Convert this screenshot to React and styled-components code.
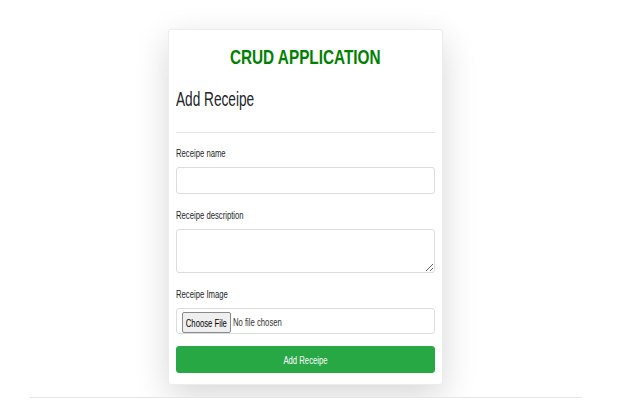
import React from "react";
import styled, { createGlobalStyle } from "styled-components";

const Global = createGlobalStyle`
  html, body { margin: 0; padding: 0; background: #fff; }
  body {
    font-family: "Liberation Sans", Arial, sans-serif;
    color: #212529;
  }
  * { box-sizing: border-box; }
`;

const Squeeze = styled.span`
  display: inline-block;
  white-space: nowrap;
  transform: scaleX(${(p) => p.$x || 0.7});
  transform-origin: ${(p) => (p.$center ? "center" : "left")} center;
`;

const Page = styled.div`
  padding-top: 29px;
  display: flex;
  flex-direction: column;
`;

const Card = styled.div`
  width: 275px;
  margin-left: 168px;
  background: #fff;
  border: 1px solid #ececec;
  border-radius: 3px;
  box-shadow: 0 11px 34px rgba(0, 0, 0, 0.16);
  padding: 14px 7px 11px;
  display: flex;
  flex-direction: column;
`;

const Title = styled.h2`
  margin: 0;
  text-align: center;
  color: #008000;
  font-weight: 700;
  font-size: 21px;
  line-height: 26px;
`;

const Heading = styled.h3`
  margin: 17px 0 0;
  font-weight: 400;
  font-size: 21px;
  line-height: 24px;
  color: #212529;
`;

const Divider = styled.hr`
  margin: 21px 0 0;
  border: 0;
  border-top: 1px solid #e6e6e6;
`;

const Field = styled.div`
  margin-top: ${(p) => p.$gap}px;
  display: flex;
  flex-direction: column;
  gap: 6px;
`;

const Label = styled.label`
  font-size: 11px;
  line-height: 16px;
  color: #212529;
`;

const TextInput = styled.input`
  height: 27px;
  width: 100%;
  border: 1px solid #dadde0;
  border-radius: 3px;
  background: #fff;
  font: inherit;
  font-size: 11px;
  padding: 0 8px;
  outline: none;
`;

const TextArea = styled.textarea`
  height: 44px;
  width: 100%;
  border: 1px solid #dadde0;
  border-radius: 3px;
  background: #fff;
  font: inherit;
  font-size: 11px;
  padding: 4px 8px;
  outline: none;
  display: block;
`;

const FileBox = styled.div`
  height: 26px;
  border: 1px solid #dadde0;
  border-radius: 3px;
  display: flex;
  align-items: flex-start;
  padding: 3px 5px 0;
  gap: 2px;
`;

const ChooseButton = styled.button`
  height: 21px;
  width: 49px;
  padding: 0;
  background: #efefef;
  border: 1px solid #8a8a8a;
  border-radius: 2px;
  font: inherit;
  font-size: 11px;
  color: #000;
  display: flex;
  align-items: center;
  justify-content: center;
  overflow: visible;
`;

const FileText = styled.span`
  font-size: 11px;
  line-height: 21px;
  color: #333;
`;

const Submit = styled.button`
  margin-top: 12px;
  height: 27px;
  width: 100%;
  background: #28a745;
  border: 1px solid #28a745;
  border-radius: 3px;
  color: #fff;
  font: inherit;
  font-size: 11px;
  display: flex;
  align-items: center;
  justify-content: center;
`;

const FooterLine = styled.hr`
  margin: 12px 0 0 30px;
  width: 552px;
  border: 0;
  border-top: 1px solid #e6e6e6;
`;

export default function App() {
  return (
    <>
      <Global />
      <Page>
        <Card>
          <Title>
            <Squeeze $x={0.73} $center>CRUD APPLICATION</Squeeze>
          </Title>
          <Heading>
            <Squeeze $x={0.65}>Add Receipe</Squeeze>
          </Heading>
          <Divider />
          <Field $gap={12}>
            <Label>
              <Squeeze>Receipe name</Squeeze>
            </Label>
            <TextInput type="text" />
          </Field>
          <Field $gap={13}>
            <Label>
              <Squeeze>Receipe description</Squeeze>
            </Label>
            <TextArea />
          </Field>
          <Field $gap={13}>
            <Label>
              <Squeeze>Receipe Image</Squeeze>
            </Label>
            <FileBox>
              <ChooseButton type="button">
                <Squeeze $center>Choose File</Squeeze>
              </ChooseButton>
              <FileText>
                <Squeeze>No file chosen</Squeeze>
              </FileText>
            </FileBox>
          </Field>
          <Submit type="button">
            <Squeeze $center>Add Receipe</Squeeze>
          </Submit>
        </Card>
        <FooterLine />
      </Page>
    </>
  );
}
